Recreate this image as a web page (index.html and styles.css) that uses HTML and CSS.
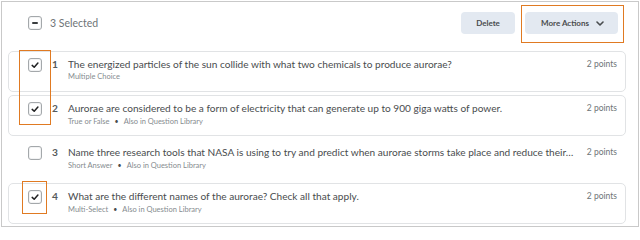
FILE: index.html
```html
<!DOCTYPE html>
<html lang="en">
<head>
<meta charset="utf-8">
<title>Questions</title>
<link rel="stylesheet" href="styles.css">
</head>
<body>
<div class="frame">
  <div class="toolbar">
    <span class="cb"><span class="minus"></span></span>
    <span class="selected-count">3 Selected</span>
    <div class="actions">
      <button class="btn btn-delete">Delete</button>
      <button class="btn btn-more">More Actions
        <svg class="chev" viewBox="0 0 8 5" width="8" height="5"><path d="M1 1 L4 4 L7 1" fill="none" stroke="#494c4e" stroke-width="1.6" stroke-linecap="round" stroke-linejoin="round"/></svg>
      </button>
    </div>
  </div>
  <ul class="list">
    <li class="item is-selected">
      <span class="cb"><svg viewBox="0 0 10 10" width="10" height="10"><path d="M2.2 5.4 L4.2 7.3 L7.9 3.1" fill="none" stroke="#202122" stroke-width="1.5" stroke-linecap="round" stroke-linejoin="round"/></svg></span>
      <span class="num">1</span>
      <div class="body">
        <div class="title">The energized particles of the sun collide with what two chemicals to produce aurorae?</div>
        <div class="meta">Multiple Choice</div>
      </div>
      <span class="points">2 points</span>
    </li>
    <li class="item is-selected">
      <span class="cb"><svg viewBox="0 0 10 10" width="10" height="10"><path d="M2.2 5.4 L4.2 7.3 L7.9 3.1" fill="none" stroke="#202122" stroke-width="1.5" stroke-linecap="round" stroke-linejoin="round"/></svg></span>
      <span class="num">2</span>
      <div class="body">
        <div class="title">Aurorae are considered to be a form of electricity that can generate up to 900 giga watts of power.</div>
        <div class="meta">True or False<span class="dot">•</span>Also in Question Library</div>
      </div>
      <span class="points">2 points</span>
    </li>
    <li class="item">
      <span class="cb"></span>
      <span class="num">3</span>
      <div class="body">
        <div class="title">Name three research tools that NASA is using to try and predict when aurorae storms take place and reduce their…</div>
        <div class="meta">Short Answer<span class="dot">•</span>Also in Question Library</div>
      </div>
      <span class="points">2 points</span>
    </li>
    <li class="item is-selected">
      <span class="cb"><svg viewBox="0 0 10 10" width="10" height="10"><path d="M2.2 5.4 L4.2 7.3 L7.9 3.1" fill="none" stroke="#202122" stroke-width="1.5" stroke-linecap="round" stroke-linejoin="round"/></svg></span>
      <span class="num">4</span>
      <div class="body">
        <div class="title">What are the different names of the aurorae? Check all that apply.</div>
        <div class="meta">Multi-Select<span class="dot">•</span>Also in Question Library</div>
      </div>
      <span class="points">2 points</span>
    </li>
  </ul>
</div>
<div class="mark mark-a"></div>
<div class="mark mark-b"></div>
<div class="mark mark-c"></div>
</body>
</html>
```

FILE: styles.css
```css
* { box-sizing: border-box; }
html, body { margin: 0; padding: 0; background: #fff; }
body {
  font-family: Lato, "Open Sans", "Liberation Sans", sans-serif;
  color: #494c4e;
  width: 640px;
  height: 228px;
  overflow: hidden;
}
.frame {
  margin: 1px 0 0 1px;
  width: 638px;
  height: 226px;
  border: 1px solid #c9c9c9;
  padding: 0 12px 0 6px;
}
.toolbar {
  display: flex;
  align-items: center;
  height: 22px;
  margin: 10px 0 17px;
  padding: 0 8px 0 20px;
}
.cb {
  flex: none;
  width: 14px;
  height: 14px;
  border: 1px solid #a4a8ab;
  border-radius: 3px;
  background: #fff;
  display: flex;
  align-items: center;
  justify-content: center;
  box-shadow: inset 0 0 0 1px #f2f3f4;
}
.minus {
  width: 6px;
  height: 2px;
  border-radius: 1px;
  background: #3a3d3f;
}
.selected-count {
  margin-left: 8px;
  font-size: 10.5px;
  color: #6e7477;
}
.actions {
  margin-left: auto;
  display: flex;
  gap: 10px;
}
.btn {
  height: 22px;
  border: none;
  border-radius: 4px;
  background: #e3e9f1;
  font-family: inherit;
  font-weight: 700;
  font-size: 8px;
  color: #494c4e;
  padding: 0;
  display: flex;
  align-items: center;
  justify-content: center;
}
.btn-delete { width: 54px; }
.btn-more { width: 93px; padding: 0 0 0 2px; gap: 7px; }
.chev { display: block; }
.list {
  list-style: none;
  margin: 0;
  padding: 0;
}
.item {
  display: flex;
  align-items: flex-start;
  height: 41px;
  margin-bottom: 3px;
  border: 1px solid transparent;
  border-radius: 5px;
  padding: 6px 8px 0 19px;
}
.item.is-selected { border-color: #e1e3e5; }
.num {
  flex: none;
  width: 16px;
  margin-left: 10px;
  font-size: 10.2px;
  line-height: 13px;
  font-weight: 700;
  color: #565a5c;
}
.body {
  flex: 1;
  min-width: 0;
}
.title {
  font-size: 10.1px;
  line-height: 13px;
  color: #494c4e;
  white-space: nowrap;
}
.meta {
  font-size: 7.5px;
  line-height: 12px;
  color: #868c8f;
}
.dot { margin: 0 5px; font-size: 7px; color: #494c4e; }
.points {
  flex: none;
  margin-left: 12px;
  font-size: 8.5px;
  line-height: 13px;
  color: #6e7477;
}
.mark {
  position: absolute;
  border: 1.5px solid #e07a22;
}
.mark-a { left: 19px; top: 50px; width: 32px; height: 75px; }
.mark-b { left: 22px; top: 181px; width: 25px; height: 33px; }
.mark-c { left: 521px; top: 5px; width: 103px; height: 38px; }
```
